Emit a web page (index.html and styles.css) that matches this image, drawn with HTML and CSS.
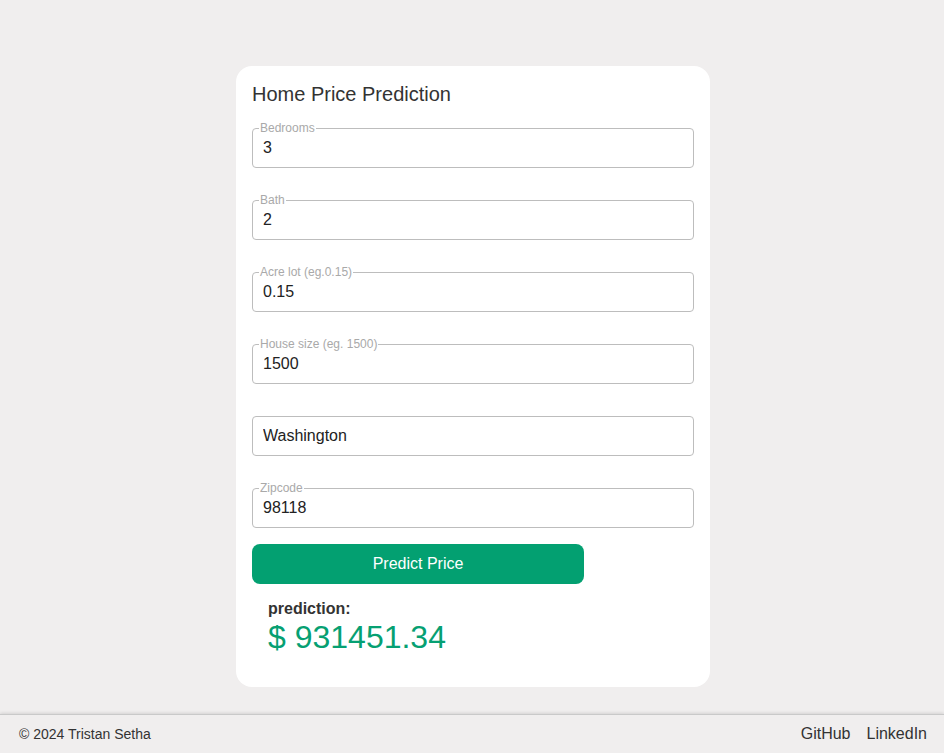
FILE: index.html
```html
<!DOCTYPE html>
<html lang="en">
<head>
    <meta charset="UTF-8">
    <meta name="viewport" content="width=device-width, initial-scale=1.0">
    <title>Home Price Prediction</title>
    <link rel="stylesheet" href="styles.css">
</head>
<body>
    <main class="page">
        <div class="card">
            <h1 class="title">Home Price Prediction</h1>

            <div class="fields">
                <div class="field">
                    <span class="field-label">Bedrooms</span>
                    <input class="field-input" type="text" value="3">
                </div>
                <div class="field">
                    <span class="field-label">Bath</span>
                    <input class="field-input" type="text" value="2">
                </div>
                <div class="field">
                    <span class="field-label">Acre lot (eg.0.15)</span>
                    <input class="field-input" type="text" value="0.15">
                </div>
                <div class="field">
                    <span class="field-label">House size (eg. 1500)</span>
                    <input class="field-input" type="text" value="1500">
                </div>
                <div class="field">
                    <input class="field-input" type="text" value="Washington">
                </div>
                <div class="field">
                    <span class="field-label">Zipcode</span>
                    <input class="field-input" type="text" value="98118">
                </div>
            </div>

            <button class="predict-btn" type="button">Predict Price</button>

            <div class="result">
                <div class="result-label">prediction:</div>
                <div class="result-value">$ 931451.34</div>
            </div>
        </div>
    </main>

    <footer class="footer">
        <span>&copy; 2024 Tristan Setha</span>
        <nav class="footer-links">
            <a href="#">GitHub</a>
            <a href="#">LinkedIn</a>
        </nav>
    </footer>
</body>
</html>
```

FILE: styles.css
```css
* {
    box-sizing: border-box;
}
html, body {
    height: 100%;
}
body {
    font-family: "Liberation Sans", Arial, sans-serif;
    margin: 0;
    padding: 0;
    display: flex;
    flex-direction: column;
    min-height: 100vh;
    background-color: #f0eeee;
    color: #333;
}
.page {
    flex: 1;
    display: flex;
    justify-content: center;
    align-items: flex-start;
    padding: 66px 0 0 2px;
}
.card {
    width: 474px;
    background-color: white;
    border-radius: 16px;
    padding: 16px 16px 32px;
}
.title {
    margin: 0;
    font-size: 20px;
    line-height: 24px;
    font-weight: normal;
    color: #333;
}
.fields {
    display: flex;
    flex-direction: column;
    gap: 32px;
    margin-top: 22px;
}
.field {
    position: relative;
    width: 442px;
}
.field-label {
    position: absolute;
    top: -6px;
    left: 7px;
    padding: 0 1px;
    font-size: 12px;
    line-height: 12px;
    color: #a9a9a9;
    background-color: white;
}
.field-input {
    display: block;
    width: 100%;
    height: 40px;
    padding: 0 10px;
    border: 1px solid #bdbdbd;
    border-radius: 4px;
    font-family: inherit;
    font-size: 16px;
    color: #222;
    background: white;
    outline: none;
}
.predict-btn {
    display: block;
    width: 332px;
    height: 40px;
    margin-top: 16px;
    border: none;
    border-radius: 8px;
    background-color: #03a071;
    color: white;
    font-family: inherit;
    font-size: 16px;
    cursor: pointer;
}
.result {
    margin-top: 15px;
    padding-left: 16px;
}
.result-label {
    font-size: 16px;
    line-height: 20px;
    font-weight: bold;
    color: #333;
}
.result-value {
    font-size: 32px;
    line-height: 36px;
    color: #06a072;
}
.footer {
    height: 39px;
    display: flex;
    justify-content: space-between;
    align-items: center;
    padding: 0 17px 0 19px;
    border-top: 1px solid #c9c9c9;
    box-shadow: 0 -1px 3px rgba(0, 0, 0, 0.12);
    background-color: #f0eeee;
    font-size: 14px;
    color: #333;
}
.footer-links {
    display: flex;
    gap: 16px;
}
.footer-links a {
    font-size: 16px;
    color: #333;
    text-decoration: none;
}
```
